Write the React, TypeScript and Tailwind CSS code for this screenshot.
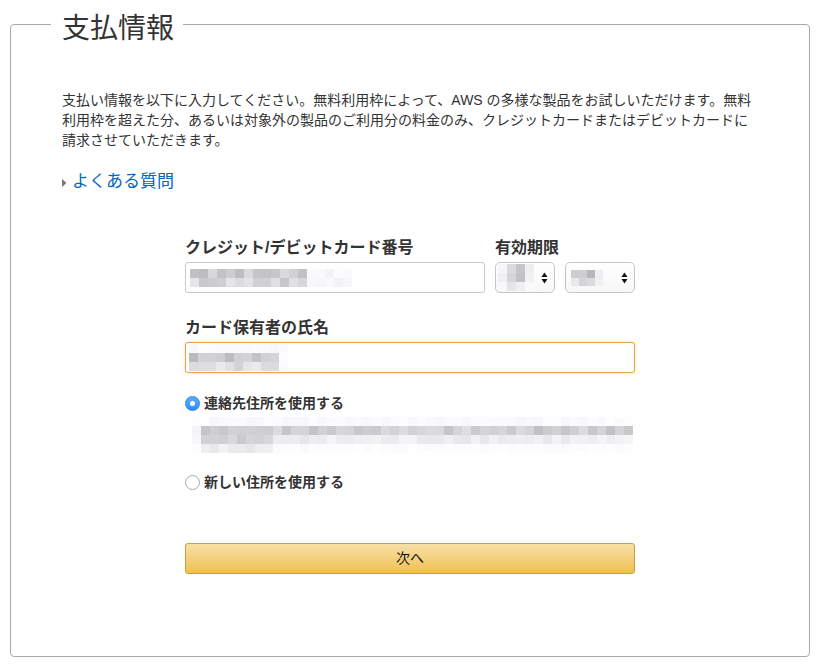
import React from "react";

function rand(seed: number) {
  let s = seed;
  return () => {
    s = (s * 9301 + 49297) % 233280;
    return s / 233280;
  };
}

function Mosaic({
  rows,
  cols,
  cell,
  seed,
  profile,
}: {
  rows: number;
  cols: number;
  cell: number;
  seed: number;
  profile: (r: number, c: number) => [number, number];
}) {
  const rnd = rand(seed);
  const grid: number[][] = [];
  for (let r = 0; r < rows; r++) {
    const row: number[] = [];
    for (let c = 0; c < cols; c++) {
      const [base, spread] = profile(r, c);
      row.push(Math.max(150, Math.min(255, Math.round(base + (rnd() - 0.5) * spread))));
    }
    grid.push(row);
  }
  return (
    <div className="flex flex-col">
      {grid.map((row, i) => (
        <div key={i} className="flex">
          {row.map((v, j) => (
            <div
              key={j}
              style={{
                width: cell,
                height: cell,
                backgroundColor: `rgb(${v},${v},${v + 3 > 255 ? 255 : v + 3})`,
              }}
            />
          ))}
        </div>
      ))}
    </div>
  );
}

function SelectArrows() {
  return (
    <svg width="7" height="12" viewBox="0 0 7 12" className="shrink-0">
      <path d="M3.5 0.5 L6.5 5 L0.5 5 Z" fill="#111" />
      <path d="M3.5 11.5 L6.5 7 L0.5 7 Z" fill="#111" />
    </svg>
  );
}

export default function App() {
  const font = { fontFamily: '"Liberation Sans", "Noto Sans CJK JP", sans-serif' };
  return (
    <div className="w-[822px] h-[667px] bg-white text-[#333]" style={font}>
      <fieldset className="ml-[10px] w-[800px] h-[657px] border border-[#a9a9a9] rounded-[4px] p-0 m-0">
        <legend className="ml-[40px] pl-[11px] pr-[9px] pt-[11px] pb-[1px] text-[28px] leading-[36px] text-[#333]">
          支払情報
        </legend>
        <div className="pl-[51px]">
          <p className="mt-[42px] text-[14px] leading-[20px] whitespace-nowrap text-[#333]">
            支払い情報を以下に入力してください。無料利用枠によって、AWS の多様な製品をお試しいただけます。無料
            <br />
            利用枠を超えた分、あるいは対象外の製品のご利用分の料金のみ、クレジットカードまたはデビットカードに
            <br />
            請求させていただきます。
          </p>
          <div className="mt-[20px] flex items-center h-[24px]">
            <svg width="5" height="8" viewBox="0 0 5 8" className="mr-[5px] mt-[1px]">
              <path d="M0 0 L4.5 4 L0 8 Z" fill="#777" />
            </svg>
            <span className="text-[17px] leading-[24px] text-[#0066c0]">よくある質問</span>
          </div>

          <div className="ml-[123px] w-[450px] mt-[44px]">
            <div className="flex gap-[10px]">
              <div className="w-[300px]">
                <div className="text-[16px] leading-[20px] font-bold text-[#333]">クレジット/デビットカード番号</div>
                <div className="mt-[4px] h-[31px] border border-[#c9c9c9] rounded-[3px] flex items-center pl-[4px] bg-white">
                  <Mosaic
                    rows={2}
                    cols={18}
                    cell={9}
                    seed={3}
                    profile={(r, c) => (c < 13 ? [r === 0 ? 200 : 215, 40] : [248, 10])}
                  />
                </div>
              </div>
              <div className="flex-1">
                <div className="text-[16px] leading-[20px] font-bold text-[#333]">有効期限</div>
                <div className="mt-[4px] flex gap-[10px]">
                  <div className="w-[60px] h-[31px] border border-[#c6c6c6] rounded-[5px] flex items-center justify-between pl-[2px] pr-[6px] bg-gradient-to-b from-white to-[#f7f7f7]">
                    <Mosaic
                      rows={3}
                      cols={4}
                      cell={9}
                      seed={11}
                      profile={(r, c) => (c === 1 || c === 2 ? [r === 2 ? 235 : 205, 35] : [244, 14])}
                    />
                    <SelectArrows />
                  </div>
                  <div className="w-[70px] h-[31px] border border-[#c6c6c6] rounded-[5px] flex items-center justify-between pl-[5px] pr-[6px] bg-gradient-to-b from-white to-[#f7f7f7]">
                    <Mosaic
                      rows={2}
                      cols={4}
                      cell={8}
                      seed={17}
                      profile={(r, c) => (c < 3 ? [r === 0 ? 195 : 222, 25] : [240, 10])}
                    />
                    <SelectArrows />
                  </div>
                </div>
              </div>
            </div>

            <div className="mt-[25px] text-[16px] leading-[20px] font-bold text-[#333]">カード保有者の氏名</div>
            <div className="mt-[4px] h-[31px] border border-[#eba24f] rounded-[3px] flex items-center pl-[3px] bg-white shadow-[0_0_3px_rgba(228,121,17,0.35)]">
              <Mosaic
                rows={3}
                cols={11}
                cell={9}
                seed={23}
                profile={(r, c) => (r === 0 ? [250, 6] : c < 10 ? [r === 1 ? 200 : 225, 30] : [250, 6])}
              />
            </div>

            <div className="mt-[20px] flex items-center h-[20px]">
              <span className="w-[15px] h-[15px] rounded-full bg-gradient-to-b from-[#5db0ff] to-[#2b8af4] border border-[#2f86e6] flex items-center justify-center">
                <span className="w-[5px] h-[5px] rounded-full bg-white" />
              </span>
              <span className="ml-[4px] text-[14px] leading-[20px] font-bold text-[#333]">連絡先住所を使用する</span>
            </div>
            <div className="mt-[4px] ml-[7px] h-[36px] overflow-hidden">
              <Mosaic
                rows={4}
                cols={49}
                cell={9}
                seed={41}
                profile={(r, c) => {
                  if (r === 0) return [250, 8];
                  if (r === 1) return c < 1 ? [245, 6] : [208, 30];
                  if (r === 2) return c < 1 ? [248, 6] : c < 9 ? [205, 30] : [238, 16];
                  return c < 9 && c > 0 ? [236, 16] : [252, 4];
                }}
              />
            </div>

            <div className="mt-[19px] flex items-center h-[20px]">
              <span className="w-[15px] h-[15px] rounded-full bg-white border border-[#a8a8a8]" />
              <span className="ml-[4px] text-[14px] leading-[20px] font-bold text-[#333]">新しい住所を使用する</span>
            </div>

            <button className="mt-[51px] w-[450px] h-[31px] rounded-[3px] border border-[#c89f38] bg-gradient-to-b from-[#f7dfa5] to-[#f0c14b] text-[14px] text-[#111] flex items-center justify-center">
              次へ
            </button>
          </div>
        </div>
      </fieldset>
    </div>
  );
}
